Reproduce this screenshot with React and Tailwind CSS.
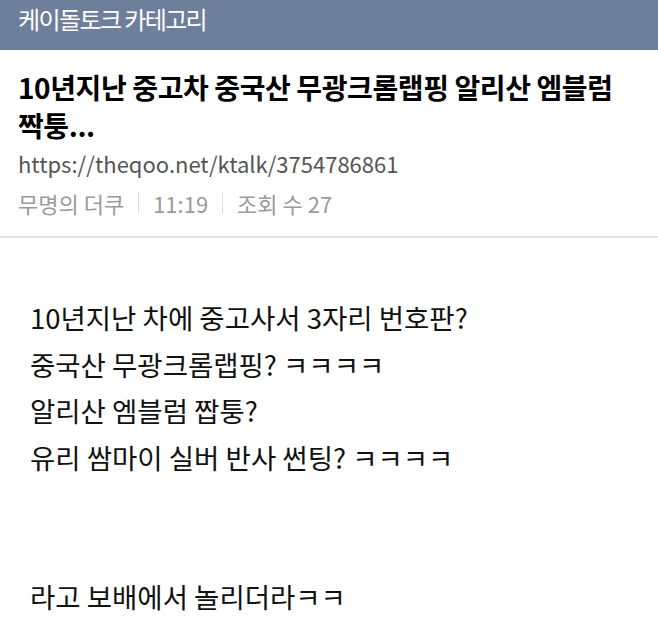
import React from 'react';

const lines = [
  '10년지난 차에 중고사서 3자리 번호판?',
  '중국산 무광크롬랩핑? ㅋㅋㅋㅋ',
  '알리산 엠블럼 짭퉁?',
  '유리 쌈마이 실버 반사 썬팅? ㅋㅋㅋㅋ',
  '',
  '',
  '라고 보배에서 놀리더라ㅋㅋ',
];

export default function App() {
  return (
    <div className="min-h-screen bg-white" style={{ fontFamily: '"Noto Sans CJK KR", "Noto Sans", sans-serif' }}>
      <div className="bg-[#6e7f9b] h-[50px] px-[18px] pt-[3px]">
        <h1 className="text-white text-[24px] leading-[32px] tracking-[-1.6px]">케이돌토크 카테고리</h1>
      </div>

      <div className="px-[18px] pt-[18px] pb-[18px] border-b-2 border-[#e3e3e3]">
        <h2 className="text-[28px] leading-[38px] font-bold text-black tracking-[-0.4px]">
          10년지난 중고차 중국산 무광크롬랩핑 알리산 엠블럼 짝퉁...
        </h2>
        <p className="mt-[4px] text-[22px] leading-[30px] text-[#555]">https://theqoo.net/ktalk/3754786861</p>
        <div className="mt-[10px] flex items-center text-[22px] leading-[30px] text-[#9a9a9a]">
          <span>무명의 더쿠</span>
          <span className="mx-[14px] h-[22px] w-px bg-[#ddd]" />
          <span>11:19</span>
          <span className="mx-[14px] h-[22px] w-px bg-[#ddd]" />
          <span>조회 수 27</span>
        </div>
      </div>

      <div className="px-[30px] pt-[56px] text-[27.5px] leading-[46.5px] text-[#111]">
        {lines.map((l, i) => (
          <p key={i} className="h-[46.5px]">{l}</p>
        ))}
      </div>
    </div>
  );
}
